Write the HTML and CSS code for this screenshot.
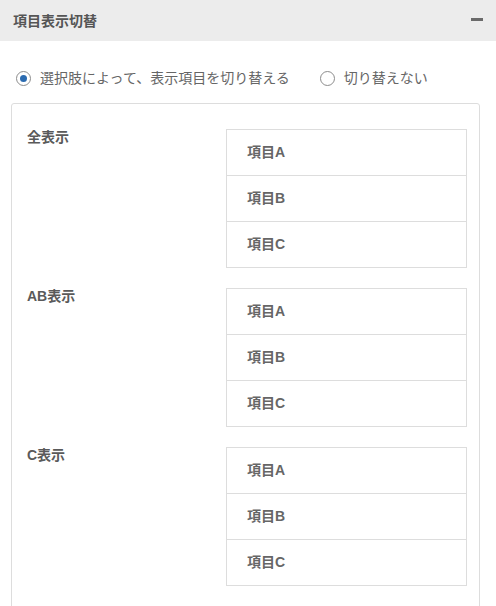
FILE: index.html
```html
<!DOCTYPE html>
<html lang="ja">
<head>
    <meta charset="UTF-8">
    <meta name="viewport" content="width=device-width, initial-scale=1.0">
    <title>項目表示切替</title>
    <link rel="stylesheet" href="styles.css">
</head>
<body>
    <div class="panel">
        <div class="panel-head">
            <span class="panel-title">項目表示切替</span>
            <span class="toggle"></span>
        </div>
        <div class="options">
            <label class="option">
                <input type="radio" name="mode" checked>
                <span>選択肢によって、表示項目を切り替える</span>
            </label>
            <label class="option">
                <input type="radio" name="mode">
                <span>切り替えない</span>
            </label>
        </div>
        <div class="box">
            <div class="group">
                <div class="group-label">全表示</div>
                <ul class="items">
                    <li>項目A</li>
                    <li>項目B</li>
                    <li>項目C</li>
                </ul>
            </div>
            <div class="group">
                <div class="group-label">AB表示</div>
                <ul class="items">
                    <li>項目A</li>
                    <li>項目B</li>
                    <li>項目C</li>
                </ul>
            </div>
            <div class="group">
                <div class="group-label">C表示</div>
                <ul class="items">
                    <li>項目A</li>
                    <li>項目B</li>
                    <li>項目C</li>
                </ul>
            </div>
        </div>
    </div>
</body>
</html>
```

FILE: styles.css
```css
body {
    margin: 0;
    font-family: "Liberation Sans", "Noto Sans CJK JP", sans-serif;
    background-color: #fff;
    color: #555;
}
.panel-head {
    height: 41px;
    background-color: #ececec;
    display: flex;
    align-items: center;
    justify-content: space-between;
    padding: 0 13px;
}
.panel-title {
    font-size: 14px;
    font-weight: bold;
    color: #555;
    padding-bottom: 2px;
}
.toggle {
    width: 12px;
    height: 3px;
    background-color: #6a6a6a;
    margin-bottom: 3px;
}
.options {
    display: flex;
    gap: 30px;
    padding: 28px 16px 16px;
}
.option {
    display: flex;
    align-items: center;
    gap: 9px;
    font-size: 14px;
    line-height: 18px;
    color: #666;
}
.option input {
    appearance: none;
    margin: 0;
    width: 15px;
    height: 15px;
    border: 1px solid #8c8c8c;
    border-radius: 50%;
    display: flex;
    align-items: center;
    justify-content: center;
    background: #fff;
}
.option input:checked::after {
    content: "";
    width: 7px;
    height: 7px;
    border-radius: 50%;
    background-color: #2b6bb0;
}
.box {
    margin: 0 16px 0 11px;
    border: 1px solid #ddd;
    border-radius: 3px;
    padding: 25px 12px 30px 15px;
    display: flex;
    flex-direction: column;
    gap: 20px;
}
.group {
    display: flex;
}
.group-label {
    width: 200px;
    font-size: 14px;
    font-weight: bold;
    line-height: 16px;
    color: #5a5a5a;
}
.items {
    list-style: none;
    margin: 0;
    padding: 0;
    width: 240px;
    border: 1px solid #ddd;
    border-bottom: none;
}
.items li {
    height: 45px;
    border-bottom: 1px solid #ddd;
    display: flex;
    align-items: center;
    padding: 0 0 3px 20px;
    box-sizing: border-box;
    height: 46px;
    font-size: 14px;
    font-weight: bold;
    color: #666;
}
```
